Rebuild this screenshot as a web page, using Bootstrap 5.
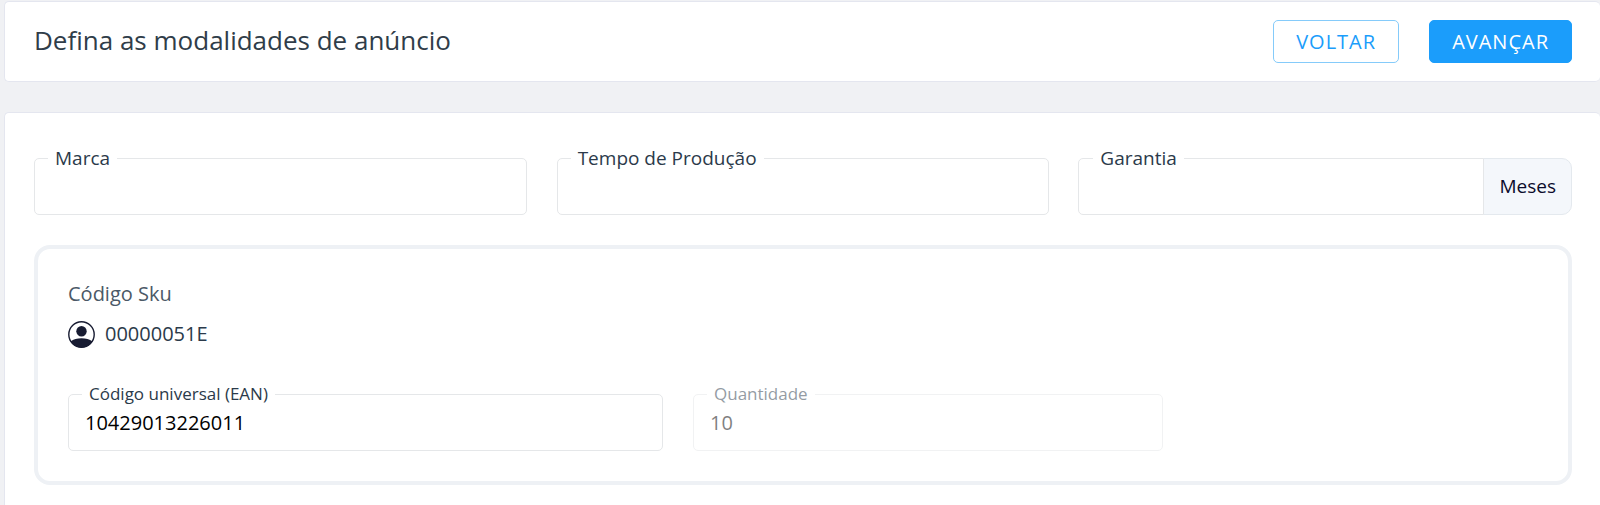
<!DOCTYPE html>
<html lang="pt-BR">
<head>
<meta charset="utf-8">
<meta name="viewport" content="width=device-width, initial-scale=1">
<title>Modalidades de anúncio</title>
<link href="https://cdn.jsdelivr.net/npm/bootstrap@5.3.0/dist/css/bootstrap.min.css" rel="stylesheet">
<style>
  body { background: #f0f1f4; color: #2b3a4a; font-family: "Open Sans", "Noto Sans", sans-serif; font-size: 20px; }
  .page { padding: 1px 0 0 4px; }
  .panel { border: 1px solid #e4e6ef; border-right: 0; border-radius: 5px; padding-left: 29px; padding-right: 28px; }
  .panel-top { padding-top: 18px; padding-bottom: 18px; }
  .panel-main { padding-top: 45px; padding-bottom: 45px; margin-top: 30px; }
  .page-title { font-size: 26px; font-weight: 500; line-height: 36px; color: #303d49; }
  .actions { gap: 30px; }
  .btn-action { height: 43px; padding: 0 22px; border-radius: 5px; font-size: 20px; line-height: 24px; letter-spacing: 1px; }
  .btn-back { --bs-btn-color: #1b9dfb; --bs-btn-border-color: #85cbfa; --bs-btn-hover-bg: #eef8ff; --bs-btn-hover-color: #1b9dfb; }
  .btn-next { --bs-btn-color: #fff; --bs-btn-bg: #1b9dfb; --bs-btn-border-color: #1b9dfb; --bs-btn-hover-color: #fff; --bs-btn-hover-bg: #0d8ae4; font-weight: 500; }
  .fields { --bs-gutter-x: 30px; --bs-gutter-y: 30px; }
  .outlined .form-control { height: 57px; padding: 0 16px; border: 1px solid #e5e7e9; border-radius: 5px; background: #fff; color: #000; font-size: 20px; }
  .outlined label { position: absolute; z-index: 6; top: -14px; left: 14px; padding: 0 7px; background: #fff; color: #2b3a4a; font-size: 19px; line-height: 28px; }
  .outlined .label-sm { font-size: 17px; }
  .outlined.input-group > .form-control { border-radius: 5px 0 0 5px !important; }
  .outlined .input-group-text { padding: 0 15px; border: 1px solid #e4e9ee; border-radius: 10px; background: #f4f7fb; color: #0b0b2b; font-size: 19px; }
  .is-locked { opacity: .5; }
  .sku-box { margin-top: 30px; padding: 27px 30px 30px; border: 4px solid #eef1f5; border-radius: 16px; }
  .sku-caption { font-size: 20px; line-height: 36px; color: #4b5967; }
  .sku-value { gap: 10px; margin-top: 8px; margin-bottom: 46px; font-size: 20px; line-height: 28px; }
</style>
</head>
<body>
<main class="page">
  <header class="panel panel-top bg-white d-flex flex-wrap align-items-center justify-content-between">
    <h1 class="page-title mb-0 pb-1">Defina as modalidades de anúncio</h1>
    <div class="actions d-flex">
      <button type="button" class="btn btn-action btn-back">VOLTAR</button>
      <button type="button" class="btn btn-action btn-next">AVANÇAR</button>
    </div>
  </header>

  <section class="panel panel-main bg-white">
    <div class="row fields">
      <div class="col-12 col-md-4">
        <div class="outlined position-relative">
          <label for="marca">Marca</label>
          <input type="text" class="form-control" id="marca">
        </div>
      </div>
      <div class="col-12 col-md-4">
        <div class="outlined position-relative">
          <label for="tempo">Tempo de Produção</label>
          <input type="text" class="form-control" id="tempo">
        </div>
      </div>
      <div class="col-12 col-md-4">
        <div class="outlined position-relative input-group">
          <label for="garantia">Garantia</label>
          <input type="text" class="form-control" id="garantia" aria-describedby="meses">
          <span class="input-group-text" id="meses">Meses</span>
        </div>
      </div>
    </div>

    <div class="sku-box">
      <div class="sku-caption">Código Sku</div>
      <div class="sku-value d-flex align-items-center">
        <svg width="27" height="27" viewBox="0 0 27 27" aria-hidden="true">
          <defs><clipPath id="disc"><circle cx="13.5" cy="13.5" r="13"/></clipPath></defs>
          <circle cx="13.5" cy="13.5" r="12.7" fill="#fff" stroke="#181c32" stroke-width="1.4"/>
          <circle cx="13.5" cy="10.3" r="5.2" fill="#181c32"/>
          <path d="M2.500 20.500C5.500 18.200 9.200 17.300 13.500 17.300S21.500 18.200 24.500 20.500L22 27H5Z" fill="#181c32" clip-path="url(#disc)"/>
        </svg>
        <span>00000051E</span>
      </div>
      <div class="row fields">
        <div class="col-12 col-md-5">
          <div class="outlined position-relative">
            <label for="ean" class="label-sm">Código universal (EAN)</label>
            <input type="text" class="form-control" id="ean" value="10429013226011">
          </div>
        </div>
        <div class="col-12 col-md-4">
          <div class="outlined position-relative is-locked">
            <label for="quantidade" class="label-sm">Quantidade</label>
            <input type="text" class="form-control" id="quantidade" value="10" disabled>
          </div>
        </div>
      </div>
    </div>
  </section>
</main>
<script src="https://cdn.jsdelivr.net/npm/bootstrap@5.3.0/dist/js/bootstrap.bundle.min.js"></script>
</body>
</html>
